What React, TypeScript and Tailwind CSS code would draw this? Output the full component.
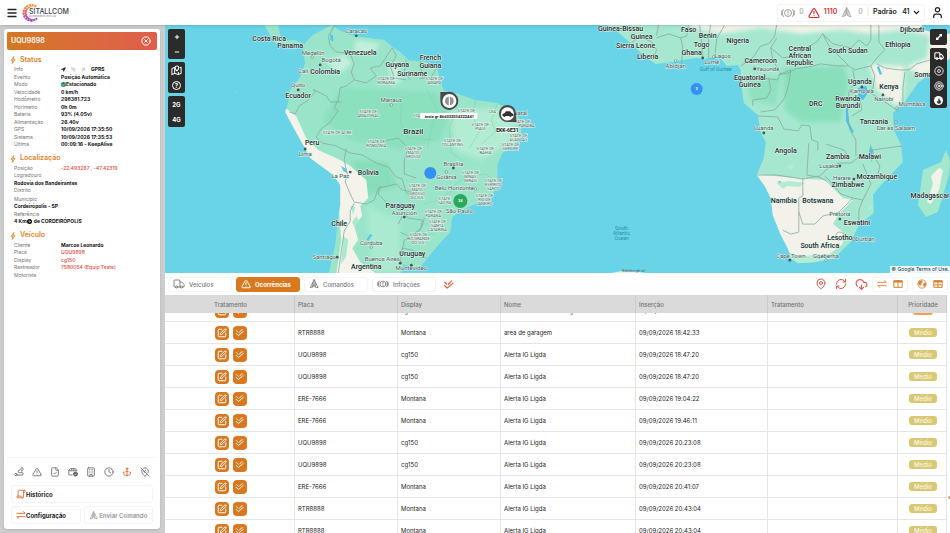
import { useLayoutEffect, useRef, useState } from "react";
import type { ReactNode } from "react";
import {
  Anchor,
  Building,
  ChevronDown,
  CircleX,
  Clock,
  CloudDownload,
  FileCheck,
  Flame,
  MapPin,
  MapPinOff,
  Menu,
  Minus,
  Navigation,
  Plus,
  RefreshCw,
  Satellite,
  Scroll,
  SquarePen,
  Target,
  TriangleAlert,
  Truck,
  User,
  WifiOff
} from "lucide-react";

type Field = { label: string; value?: ReactNode; red?: boolean };

const statusFields: Field[] = [
  { label: "Evento", value: "Posição Automática" },
  {
    label: "Modo",
    value: (
      <span className="flex items-center">
        <svg viewBox="0 0 10 10" className="size-[5px]">
          <circle cx="5" cy="5" r="5" fill="#15924f" />
          <path d="M2.5 5.2l1.8 1.8L7.6 3.4" stroke="#fff" strokeWidth="1.2" fill="none" />
        </svg>
        Estacionado
      </span>
    )
  },
  { label: "Velocidade", value: "0 km/h" },
  { label: "Hodômetro", value: "298381.723" },
  { label: "Horímetro", value: "0h 0m" },
  { label: "Bateria", value: "93% (4.05v)" },
  { label: "Alimentação", value: "26.40v" },
  { label: "GPS", value: "10/09/2026 17:35:50" },
  { label: "Sistema", value: "10/09/2026 17:35:53" },
  { label: "Última", value: "00:09:16 - KeepAlive" }
];

const vehicleFields: Field[] = [
  { label: "Cliente", value: "Marcos Leonardo" },
  { label: "Placa", value: "UQU9898", red: true },
  { label: "Display", value: "cg150", red: true },
  { label: "Rastreador", value: "7580054 (Equip Teste)", red: true },
  { label: "Motorista" }
];

const rows = [
  ["UQU9898", "cg150", "Bateria do veículo desligada", "10/09/2026 08:12:15", "Alta"],
  ["RTR8888", "Montana", "area de garagem", "09/09/2026 18:42:33", "Médio"],
  ["UQU9898", "cg150", "Alerta IG Ligda", "09/09/2026 18:47:20", "Médio"],
  ["UQU9898", "cg150", "Alerta IG Ligda", "09/09/2026 18:47:20", "Médio"],
  ["ERE-7666", "Montana", "Alerta IG Ligda", "09/09/2026 19:04:22", "Médio"],
  ["ERE-7666", "Montana", "Alerta IG Ligda", "09/09/2026 19:46:11", "Médio"],
  ["UQU9898", "cg150", "Alerta IG Ligda", "09/09/2026 20:23:08", "Médio"],
  ["UQU9898", "cg150", "Alerta IG Ligda", "09/09/2026 20:23:08", "Médio"],
  ["ERE-7666", "Montana", "Alerta IG Ligda", "09/09/2026 20:41:07", "Médio"],
  ["RTR8888", "Montana", "Alerta IG Ligda", "09/09/2026 20:43:04", "Médio"],
  ["RTR8888", "Montana", "Alerta IG Ligda", "09/09/2026 20:43:04", "Médio"]
];

type Label = [number, number, string];

const countries: Label[] = [
  [269, 41, "Costa Rica"], [290, 48, "Panama"], [360, 55, "Venezuela"], [325, 74, "Colombia"],
  [298, 98, "Ecuador"], [397, 67, "Guyana"], [430, 60, "French"], [430, 68, "Guiana"],
  [412, 76, "Suriname"], [312, 145, "Peru"], [368, 175, "Bolivia"], [400, 208, "Paraguay"],
  [339, 226, "Chile"], [412, 256, "Uruguay"], [366, 269, "Argentina"], [620, 31, "Guinea-Bissau"],
  [641, 39, "Guinea"], [635, 48, "Sierra Leone"], [647, 59, "Liberia"], [688, 32, "Faso"],
  [691, 55, "Ghana"], [707, 38, "Benin"], [701, 47, "Togo"], [737, 43, "Nigeria"],
  [760, 63, "Cameroon"], [799, 51, "Central"], [799, 58, "African"], [799, 65, "Republic"],
  [847, 53, "South Sudan"], [897, 47, "Ethiopia"], [911, 32, "Djibouti"], [926, 77, "Somalia"],
  [749, 80, "Equatorial"], [749, 87, "Guinea"], [859, 84, "Uganda"], [888, 89, "Kenya"],
  [847, 101, "Rwanda"], [847, 108, "Burundi"], [815, 106, "DRC"], [873, 124, "Tanzania"],
  [785, 153, "Angola"], [837, 159, "Zambia"], [869, 159, "Malawi"], [876, 179, "Mozambique"],
  [847, 187, "Zimbabwe"], [783, 203, "Namibia"], [817, 203, "Botswana"], [929, 198, "Madagascar"],
  [856, 225, "Eswatini"], [839, 240, "Lesotho"], [819, 248, "South Africa"]
];

const cities: Label[] = [
  [356, 33, "Caracas"], [313, 55, "Medellín"], [331, 62, "Bogotá"], [303, 73, "Cali"],
  [298, 87, "Quito"], [391, 102, "Manaus"], [305, 156, "Lima"], [340, 178, "La Paz"],
  [404, 215, "Asunción"], [371, 245, "Córdoba"], [324, 259, "Santiago"], [382, 261, "Buenos Aires"],
  [411, 270, "Montevideo"], [453, 166, "Brasília"], [446, 179, "Goiânia"], [454, 190, "Belo Horizonte"],
  [459, 213, "São Paulo"], [675, 68, "Abidjan"], [722, 58, "Lagos"], [711, 64, "Lomé"],
  [767, 71, "Yaoundé"], [861, 93, "Kampala"], [883, 101, "Nairobi"], [911, 106, "Mombasa"],
  [895, 130, "Dar es Salaam"], [763, 130, "Luanda"], [828, 168, "Lusaka"], [841, 180, "Harare"],
  [839, 216, "Pretoria"], [864, 241, "Durban"], [790, 258, "Cape Town"], [825, 258, "Gqeberha"],
  [520, 115, "Natal"]
];

const states: Label[] = [
  [386, 80, "STATE OF"], [386, 84, "RORAIMA"], [434, 80, "STATE OF"], [434, 84, "AMAPÁ"],
  [368, 113, "STATE OF"], [368, 117, "AMAZONAS"], [416, 117, "STA"], [337, 134, "STATE OF ACRE"],
  [376, 143, "STATE OF"], [376, 147, "RONDÔNIA"], [413, 150, "STATE OF"], [413, 154, "MATO"],
  [413, 158, "GROSSO"], [466, 112, "STATE OF"], [480, 126, "STATE OF"],
  [480, 130, "PIAUÍ"], [492, 113, "CEA"], [521, 123, "STATE OF"], [526, 127, "PARAÍBA"],
  [452, 142, "STATE OF"], [452, 146, "TOCANTINS"], [518, 137, "STATE OF"], [518, 141, "ALAGOAS"],
  [510, 146, "STATE OF"], [510, 150, "SERGIPE"], [485, 150, "STATE OF"], [485, 154, "BAHIA"],
  [470, 174, "STATE OF"], [470, 178, "MINAS"], [470, 182, "GERAIS"], [493, 182, "STATE OF"],
  [493, 186, "ESPÍRITO"], [493, 190, "SANTO"], [484, 197, "STATE OF"], [484, 201, "RIO DE"],
  [484, 205, "JANEIRO"], [444, 200, "STATE"], [444, 204, "SÃO PA"], [417, 187, "STATE OF"],
  [417, 191, "MATO"], [417, 195, "GROSSO"], [417, 199, "DO SUL"], [433, 213, "STATE OF"],
  [433, 217, "PARANÁ"], [437, 223, "STATE OF"], [437, 227, "SANTA"], [437, 231, "CATARINA"],
  [418, 236, "STATE OF"], [418, 240, "RIO GRANDE"], [418, 244, "DO SUL"]
];

const dots = [
  [356, 36], [320, 65], [298, 90], [305, 149], [350, 172], [404, 217], [337, 257], [400, 263],
  [411, 265], [453, 168], [702, 58], [754, 69], [861, 87], [882, 95], [763, 133], [839, 166],
  [853, 179], [839, 219], [789, 260]
];

const rings = [
  [312, 57], [391, 105], [371, 247], [446, 172], [475, 189], [675, 61], [713, 57], [896, 108],
  [895, 122], [853, 239], [825, 260]
];

const borders = [
  "M333 27l-5 10 2 9 6 6 14 2 4 10-3 8 3 8-8 6-6 2-2 12-4 8 4 3-9 12-8 6-5 8 6 6 14 3 14 7 12 2 14 8 12 4 8 10 6 2 4 14 10 4",
  "M354 80l12 3 10-7-6-8 10-2 12-18M392 48l4 8-6 10 4 12 12 2M406 60l-2 12 6 8M420 60l2 18M437 67l-6 10-12 2M289 112l6 2 4-8 8-5 8-9-2-3",
  "M314 90l12 6 4 6 12 0 M346 148l-2 12 3 14-2 8 5 12 4 8 12 2 8-4 4-12 18-4 6 6 12 2",
  "M380 186l-2 8 12 12 10 4 8 8 14 2-2 10-12 6-8-4M402 216l-4 8M424 218l-2 8-12 12-6 2-2 10M402 248l10 2 14 8M402 248l-2 14",
  "M354 203l-4 8 0 10-6 10-2 14-2 14-2 14M380 142l18-4 10 10-4 12 0 14 12 4",
  "M617 32l10-4 4-4M631 43l8-7 12 6 5 8-4 10M656 36l2-12M656 38l12-4 12 4 6-2 2-12M680 38l2 8-1 18M702 59l-1-16-2-18M708 58l0-20 2-14M714 57l2-18 8-14",
  "M740 66l12-8 8-12 8-2 6-8 2-12M776 38l-6 10 2 12 8 14 10-4M770 48l12 10 14-2 10-8 10-6 6-8M822 34l6 12 20 20-12 0-16-2-12 3-14 2-6 4-10 2M822 34l10 10 18 4 8-8 8 6 4-6 0-16",
  "M848 66l6 4 16-4 6-8 8-8-6-8 0-16M876 64l8 4 14 2 10 0 8-6 20-6M904 72l-2 16 0 14M870 66l4 10-2 12-4 4M852 70l2 12-6 10-1 18M868 92l22 14 8 6M868 92l-10 0-8 2M847 98l12 2 2 10-10 6",
  "M743 80l8 0 8-2 18 2 2-6M768 78l2 12-4 8-14 2 0 6M790 70l-2 14-4 14-10 12-14 2M757 116l20 1 6 12 14 2 4-6 8 1 2 14 6 2 0 8M847 116l2 14 6 10 0 16M808 143l-2 32 12 2 8 4M825 144l18 6 6 8M756 175l20 0 26 4 16-3M818 177l8-8 12-6 12 0 8-6 8 2 6-8M871 148l2 8 6 10-2 8M871 150l30-4",
  "M802 178l0 18-4 2 0 34-8 2-8-4M798 212l4 12 12 0 8-8 16-4 14-14-12-4-10-12-6-6M852 198l10 2 8-16-8-20M862 200l-4 10 0 14-4 0M846 220l8 4"
];

const stateBorders = [
  "M427 90l10 20-6 18-4 20M455 94l2 18-8 14 2 26 10 8M475 100l-2 18 6 14-10 16M497 104l-6 16 4 12-14 12",
  "M497 182l-12-8-18 2-14 10-6 16M424 204l14-4 14-10M425 224l24-4M418 236l16-2M402 96l-2 26 8 16 26 2"
];

const southAmerica =
  "M303 52L305 63 300 77 290 90 288 103 285 112 293 127 303 145 310 158 333 175 340 185 340 205 337 225 335 245 328 275 400 275 403 264 410 266 420 267 427 258 438 245 450 232 452 217 462 210 475 204 492 195 497 182 497 165 502 153 515 145 520 135 522 123 515 113 497 103 475 100 455 93 444 91 440 83 437 67 425 62 408 60 400 52 392 47 384 40 374 39 360 37 350 35 340 31 334 27 331 34 333 25 326 28 313 35 306 42 303 46 294 43 286 46 276 44 270 36 264 24 278 24 280 36 284 41 294 40 304 44z";

const africa =
  "M604 23L617 32 626 40 632 45 642 55 655 64 672 62 682 60 695 58 703 59 718 56 726 66 737 65 740 70 740 80 743 103 757 115 760 133 765 142 763 158 756 175 764 186 770 198 772 215 780 235 787 248 790 258 797 263 813 262 833 258 850 242 858 225 873 213 872 195 880 185 902 162 900 145 893 130 892 113 903 103 917 83 930 73 952 56 952 34 935 34 922 30 920 23z";

type IconProps = { className?: string };

function SirenIcon({ className }: IconProps) {
  return (
    <svg viewBox="0 0 28 24" className={className} fill="none" stroke="currentColor" strokeWidth="2" strokeLinecap="round">
      <circle cx="14" cy="12" r="7" />
      <path d="M14 8v4.5M14 15.5v.3M5 5a11 11 0 0 0 0 14M23 5a11 11 0 0 1 0 14M2 7a13 13 0 0 0 0 10M26 7a13 13 0 0 1 0 10" />
    </svg>
  );
}

function CommandIcon({ className }: IconProps) {
  return (
    <svg viewBox="0 0 24 24" className={className} fill="none" stroke="currentColor" strokeWidth="2" strokeLinejoin="round" strokeLinecap="round">
      <path d="M12 2L3 21l6-2 3-5 3 5 6 2zM12 2v12M9 19V9M15 19V9" />
    </svg>
  );
}

function DoubleCheck({ className }: IconProps) {
  return (
    <svg viewBox="0 0 24 24" className={className} fill="none" stroke="currentColor" strokeWidth="2.6" strokeLinecap="round" strokeLinejoin="round">
      <path d="M3 14l6 6L22 9M4 7l4 4M12 11l7-7" />
    </svg>
  );
}

function TransferIcon({ className }: IconProps) {
  return (
    <svg viewBox="0 0 24 24" className={className} fill="none" stroke="currentColor" strokeWidth="2.2" strokeLinecap="round" strokeLinejoin="round">
      <path d="M2 8h20l-4-4M22 16H2l4 4" />
    </svg>
  );
}

function RouteIcon({ className }: IconProps) {
  return (
    <svg viewBox="0 0 24 24" className={className} fill="none" stroke="currentColor" strokeWidth="2" strokeLinecap="round" strokeLinejoin="round">
      <circle cx="4.500" cy="18" r="2.800" />
      <path d="M7.500 19.500H19a3 3 0 0 0 0-6h-6a3 3 0 0 1 0-6h1M19 9.500s3-2.600 3-5a3 3 0 0 0-6 0c0 2.400 3 5 3 5z" />
    </svg>
  );
}

function DeliveryIcon({ className }: IconProps) {
  return (
    <svg viewBox="0 0 24 24" className={className} fill="none" stroke="currentColor" strokeWidth="2" strokeLinejoin="round">
      <path d="M11 19H2V8l3-4h13l3 4v2M2 9h19M9 4v5M14 4v5" />
      <circle cx="18" cy="17" r="5" fill="currentColor" />
      <path d="M16 17l1.500 1.500L20 16" stroke="#fff" strokeWidth="1.500" />
    </svg>
  );
}

function ColumnsIcon({ className }: IconProps) {
  return (
    <svg viewBox="0 0 24 24" className={className} fill="none" stroke="currentColor" strokeWidth="2.400" strokeLinejoin="round">
      <path d="M2 4h20v16H2zM12 6v14" />
      <path d="M2 6h20" strokeWidth="5" />
    </svg>
  );
}

function GridIcon({ className }: IconProps) {
  return (
    <svg viewBox="0 0 24 24" className={className} fill="none" stroke="currentColor" strokeWidth="2.400" strokeLinejoin="round">
      <path d="M2 4h20v16H2zM12 6v14M2 14h20" />
      <path d="M2 6h20" strokeWidth="5" />
    </svg>
  );
}

function BoltIcon({ className }: IconProps) {
  return (
    <svg viewBox="0 0 14 20" className={className} fill="none" stroke="currentColor" strokeWidth="2.2" strokeLinejoin="round">
      <path d="M9 1.500L2 11h4.500L5 18.500 12 9H7.500z" />
    </svg>
  );
}

function Logo() {
  return (
    <div className="flex items-center">
      <svg viewBox="0 0 24 24" className="h-[18px] w-[18px]" fill="none">
        <defs>
          <linearGradient id="ring" x1="0" y1="0" x2="0" y2="1">
            <stop offset="0" stopColor="#f39a3e" />
            <stop offset=".5" stopColor="#e2606c" />
            <stop offset="1" stopColor="#9a35c9" />
          </linearGradient>
        </defs>
        <path d="M19 3.5A10.500 10.500 0 1 0 20 19" stroke="url(#ring)" strokeWidth="2.600" strokeDasharray="3 .8" />
        <path d="M18 5A9 9 0 1 0 18 19 8 8 0 1 1 18 5z" fill="url(#ring)" />
      </svg>
      <div className="-ml-[11px] flex flex-col">
        <span className="text-[7px] leading-[7px] font-medium text-[#3c3c44]">SITALLCOM</span>
        <span className="text-[2px] leading-[3px] text-gray-500">RASTREAMENTO VEICULAR</span>
      </div>
    </div>
  );
}

function TopBar() {
  return (
    <header className="relative z-10 flex h-[25px] shrink-0 items-center justify-between bg-white px-[6px] shadow-sm">
      <div className="flex items-center gap-1">
        <button aria-label="Menu" className="text-[#222]">
          <Menu className="size-3" strokeWidth={2.6} />
        </button>
        <Logo />
      </div>
      <div className="flex items-center gap-[6px]">
        <div className="flex h-[18px] items-center rounded-[3px] border border-gray-100 px-[3px] text-[7px]">
          <SirenIcon className="h-3 w-[14px] text-neutral-400" />
          <span className="ml-1 text-neutral-400">0</span>
          <TriangleAlert className="ml-1 size-3 text-[#d32f2f]" strokeWidth={2.4} />
          <span className="ml-1 font-semibold text-[#d32f2f]">1110</span>
          <CommandIcon className="ml-1 size-[11px] text-neutral-400" />
          <span className="ml-[6px] text-neutral-400">0</span>
          <span className="mx-1 text-neutral-300">|</span>
          <div className="relative flex items-center">
            <select aria-label="Perfil" className="appearance-none pr-[11px] font-semibold text-[#222]">
              <option>Padrão&nbsp;&nbsp; 41</option>
            </select>
            <ChevronDown className="pointer-events-none absolute right-0 size-[9px]" strokeWidth={2.8} />
          </div>
        </div>
        <button aria-label="Usuário" className="text-[#222]">
          <User className="size-[13px]" strokeWidth={2.4} />
        </button>
      </div>
    </header>
  );
}

function SectionTitle({ children }: { children: ReactNode }) {
  return (
    <h2 className="flex h-3 items-center gap-1 pl-[3px] text-[7px] font-semibold text-[#de8228]">
      <BoltIcon className="h-2 w-[6px]" />
      {children}
    </h2>
  );
}

function FieldRow({ label, value, red }: Field) {
  return (
    <div className="flex">
      <dt className="w-[47px] text-neutral-500">{label}</dt>
      <dd className={red ? "font-medium text-[#e0483e]" : "font-bold text-[#111]"}>{value}</dd>
    </div>
  );
}

function VehiclePanel() {
  const tools = [RouteIcon, TriangleAlert, FileCheck, DeliveryIcon, Building, Clock, Anchor, MapPinOff];
  const names = ["Rota", "Alertas", "Documento", "Entregas", "Empresa", "Horário", "Âncora", "Sem local"];

  return (
    <aside className="flex w-[165px] shrink-0 flex-col bg-[#cdcdcd] py-1 pr-[5px] pl-1">
      <div className="flex flex-1 flex-col rounded-[3px] bg-white p-[3px] shadow">
        <div className="flex h-[18px] items-center justify-between rounded-[2px] bg-linear-to-r from-[#d4781f] to-[#e05d4c] px-1 text-white">
          <h1 className="text-[7px] font-semibold">UQU9898</h1>
          <button aria-label="Fechar" className="mr-[2px]">
            <CircleX className="size-[10px]" strokeWidth={2.4} />
          </button>
        </div>

        <div className="pt-1 text-[5px] leading-normal">
          <SectionTitle>Status</SectionTitle>
          <dl className="pl-[7px]">
            <FieldRow
              label="Info"
              value={
                <span className="flex items-center gap-[5px]">
                  <Navigation className="size-[5px]" fill="currentColor" />
                  <WifiOff className="size-[5px] text-neutral-400" />
                  <Satellite className="size-[5px] text-neutral-400" />
                  GPRS
                </span>
              }
            />
            {statusFields.map((f) => (
              <FieldRow key={f.label} {...f} />
            ))}
          </dl>
        </div>

        <div className="pt-1 text-[5px] leading-normal">
          <SectionTitle>Localização</SectionTitle>
          <dl className="pl-[7px]">
            <FieldRow label="Posição" value="-22.493267 , -47.42319" red />
            <dt className="text-neutral-500">Logradouro</dt>
            <dd className="font-bold text-[#111]">Rodovia dos Bandeirantes</dd>
            <dt className="text-neutral-500">Distrito</dt>
            <dt className="pt-px text-neutral-500">Município</dt>
            <dd className="font-bold text-[#111]">Cordeirópolis - SP</dd>
            <dt className="text-neutral-500">Referência</dt>
            <dd className="flex items-center font-bold text-[#111]">
              4 Km
              <svg viewBox="0 0 10 10" className="mr-[2px] size-[5px]">
                <circle cx="5" cy="5" r="5" fill="#111" />
                <path d="M3 5h4M5 3l2 2-2 2" stroke="#fff" strokeWidth="1.2" fill="none" />
              </svg>
              de CORDEIRÓPOLIS
            </dd>
          </dl>
        </div>

        <div className="pt-1 text-[5px] leading-normal">
          <SectionTitle>Veículo</SectionTitle>
          <dl className="pl-[7px]">
            {vehicleFields.map((f) => (
              <FieldRow key={f.label} {...f} />
            ))}
          </dl>
        </div>

        <div className="mt-auto border-t border-gray-100 px-1 pt-[9px] pb-[2px]">
          <div className="flex justify-between px-[3px] text-[#666]">
            {tools.map((Icon, i) => (
              <button key={names[i]} aria-label={names[i]} className={i === 6 ? "text-[#d9672b]" : ""}>
                <Icon className="size-[10px]" />
              </button>
            ))}
          </div>
          <div className="mt-2 grid grid-cols-2 gap-[3px] text-[6px] font-bold text-[#222]">
            <button className="col-span-2 flex h-[18px] items-center rounded-[3px] border border-gray-100 px-1">
              <Scroll className="size-[10px] -scale-x-100 text-[#d9672b]" />
              Histórico
            </button>
            <button className="flex h-[18px] items-center rounded-[3px] border border-gray-100 px-1">
              <TransferIcon className="size-[10px] text-[#d9672b]" />
              Configuração
            </button>
            <button className="flex h-[18px] items-center justify-center gap-px rounded-[3px] border border-gray-100 text-neutral-400" disabled>
              <CommandIcon className="size-[9px]" />
              Enviar Comando
            </button>
          </div>
        </div>
      </div>
    </aside>
  );
}

function WorldMap() {
  return (
    <svg viewBox="165 25 785 248" preserveAspectRatio="xMidYMid slice" className="absolute inset-0 size-full font-['Roboto',sans-serif]">
      <defs>
        <clipPath id="sa"><path d={southAmerica} /></clipPath>
        <clipPath id="af"><path d={africa} /></clipPath>
        <filter id="soft"><feGaussianBlur stdDeviation="2" /></filter>
      </defs>
      <rect x="165" y="25" width="785" height="248" fill="#69d3e7" />

      <path d={southAmerica} fill="#9ae5c9" />
      <g clipPath="url(#sa)">
        <g filter="url(#soft)">
          <path d="M340 88L436 92 450 110 440 140 400 150 350 140 322 120z" fill="#8be0be" />
          <path d="M350 160L388 162 396 186 366 196z" fill="#88deba" />
          <path d="M325 60L345 55 352 64 338 74z M388 66l10-4 4 18-10 6z M356 40l24 4-8 10-18-2z" fill="#c3f0dc" />
          <path d="M450 110L510 108 515 140 480 160 455 150z" fill="#b2ecd2" />
          <path d="M366 205L400 220 400 270 372 272z" fill="#a9ead0" />
        </g>
        <path d="M280 104L296 116 306 138 318 150 340 160 350 166 357 172 366 180 368 198 360 206 362 216 354 226 358 240 352 248 360 262 378 275 336 275 341 240 338 200 320 180z" fill="#f3f3ea" />
        <path d="M343 236l5 4-2 16-5 8zM352 222l4-6 3 5-5 6zM350 206l5 1-2 7z" fill="#a9ead0" />
        <path d="M341 166l5 3 1 4-4-2zM330 34l3 2 0 6-3-2zM352 218l3-3M366 240l4-6 2 1-4 6z" fill="#58c6ea" />
      </g>

      <path d={africa} fill="#a5e8cf" />
      <g clipPath="url(#af)">
        <g filter="url(#soft)">
          <path d="M782 68L842 66 848 80 840 122 800 122 784 110z" fill="#89dfbb" />
          <path d="M745 80L780 76 776 106 750 100z" fill="#8fe1c0" />
          <path d="M690 22L950 22 950 32 930 36 900 30 870 34 840 30 800 34 760 28 720 34 690 28z" fill="#f1f2e8" />
          <path d="M930 28L952 24 952 60 920 78 906 66 926 58z" fill="#f1f2e8" />
          <path d="M868 64L904 66 902 100 896 106 876 90z" fill="#f1f2e8" />
        </g>
        <path d="M752 174L806 179 824 180 842 198 852 200 838 214 832 224 842 232 842 244 826 256 800 256 780 250 760 200z" fill="#f3f2ea" />
        <path d="M776 183l12-2 16 2-6 4-12-1-4 3zM786 168l4-4 4 2-3 4zM868 204l4 4-4 2z" fill="#b2ecd2" />
        <path d="M786 252l8 6 20-4 12 0 8 4-10 6-30 2z" fill="#b2ecd2" />
        <path d="M857 88l8-2 3 6-6 8-5-2zM845 108l2 0 1 14 5 10-2 1-6-12zM870 144l2 12-1 6-3-10zM878 66l3 8-2 1-3-8zM776 182l4-1 0 2z" fill="#4fc1ea" />
      </g>
      <path d="M945 150L940 162 922 170 920 185 917 205 925 217 937 212 948 175 949 160z" fill="#a3e8cd" />
      <path d="M938 168l4 2-4 20-8 14-4-2 6-18-2-8z" fill="#f1f2e8" />
      <path d="M610 273l10-2 14 0 12 2z" fill="#e6efe6" />
      <path d="M234 91l2 1-1 1zM242 92l2 0-1 1z" fill="#97e5c6" />

      <g fill="none" stroke="#86ab9e" strokeWidth=".8" strokeLinejoin="round">
        {borders.map((d) => (
          <path key={d} d={d} />
        ))}
        <circle cx="839" cy="236" r="4" />
      </g>
      <g fill="none" stroke="#84cdb1" strokeWidth=".5">
        {stateBorders.map((d) => (
          <path key={d} d={d} />
        ))}
      </g>

      <g textAnchor="middle" stroke="#e3f6ee" strokeWidth="1" paintOrder="stroke" strokeLinejoin="round">
        <g fontSize="4" fill="#4d635c">
          {states.map(([x, y, name], i) => (
            <text key={i} x={x} y={y}>{name}</text>
          ))}
        </g>
        <g fontSize="6" fill="#47565a">
          {cities.map(([x, y, name]) => (
            <text key={name} x={x} y={y}>{name}</text>
          ))}
        </g>
        <g fontSize="7" fontWeight="500" fill="#222c2e">
          {countries.map(([x, y, name], i) => (
            <text key={i} x={x} y={y}>{name}</text>
          ))}
          <text x="413" y="134" fontSize="8">Brazil</text>
        </g>
      </g>
      <g textAnchor="middle" fontSize="5" fill="#2c8fa8">
        <text x="715" y="71">Gulf of Guinea</text>
        <text x="621" y="230">South</text>
        <text x="621" y="235">Atlantic</text>
        <text x="621" y="240">Ocean</text>
      </g>
      <text x="633" y="272" textAnchor="middle" fontSize="4" fill="#47565a">Edinburgh of</text>

      {dots.map(([x, y]) => (
        <circle key={`${x}-${y}`} cx={x} cy={y} r="1.400" fill="#47565a" />
      ))}
      {rings.map(([x, y]) => (
        <circle key={`${x}-${y}`} cx={x} cy={y} r="1.200" fill="#fff" stroke="#47565a" strokeWidth=".5" />
      ))}

      <circle cx="430" cy="173" r="6" fill="#3391f2" />
      <circle cx="696" cy="89" r="6" fill="#3391f2" />
      <circle cx="460" cy="201" r="7" fill="#2aa95b" />
      <g textAnchor="middle" fontSize="4" fontWeight="700" fill="#fff">
        <text x="696" y="90">2</text>
        <text x="460" y="202">34</text>
      </g>

      <path d="M440 92h8a9 9 0 1 1-8 9z" fill="#4a4a4a" />
      <circle cx="449" cy="101" r="7" fill="#fff" />
      <g fill="#999" stroke="#666" strokeWidth=".5">
        <path d="M448 97v8q-3-1-3-4t3-4zM450 97v8q3-1 3-4t-3-4z" />
      </g>
      <path d="M516 122h-9a8.500 8.500 0 1 1 8.500-8z" fill="#4a4a4a" />
      <circle cx="507" cy="114" r="6.600" fill="#fff" />
      <path d="M502 116v-2l2-.6 1.500-2h4l2 2 1.500.6v2z" fill="#333" />
      <circle cx="504" cy="116" r="1" fill="#333" />
      <circle cx="510" cy="116" r="1" fill="#333" />
      <rect x="420" y="113" width="57" height="6" fill="#fff" />
      <rect x="496" y="127" width="22" height="6" fill="#fff" opacity=".8" />
      <g textAnchor="middle" fontWeight="700" fill="#111">
        <text x="449" y="118" fontSize="4">teste gr 866032034322441</text>
        <text x="507" y="132" fontSize="5">EKK-6E31</text>
      </g>
    </svg>
  );
}

function MapPanel() {
  return (
    <section aria-label="Mapa" className="relative overflow-hidden">
      <WorldMap />
      <div className="absolute top-1 left-[3px] flex flex-col gap-[3px] text-white">
        <div className="flex w-[17px] flex-col rounded-[2px] bg-[#2b2b2b]">
          <button aria-label="Aproximar" className="grid h-[15px] place-items-center"><Plus className="size-[6px]" strokeWidth={4} /></button>
          <button aria-label="Afastar" className="grid h-[15px] place-items-center"><Minus className="size-[6px]" strokeWidth={4} /></button>
        </div>
        <div className="flex w-[17px] flex-col rounded-[2px] bg-[#2b2b2b]">
          <button aria-label="Mapa com ponto" className="grid h-4 place-items-center">
            <svg viewBox="0 0 24 24" className="size-[11px]" fill="none" stroke="currentColor" strokeWidth="2.200" strokeLinejoin="round">
              <path d="M8 5L2 8v13l6-3 8 3 6-3V5l-3 1M8 5v13M16 15v6" />
              <path d="M13 13s4-4 4-7a4 4 0 0 0-8 0c0 3 4 7 4 7z" />
            </svg>
          </button>
          <button aria-label="Ajuda" className="grid h-[15px] place-items-center">
            <span className="grid size-[9px] place-items-center rounded-full border border-white text-[6px] leading-none font-bold">?</span>
          </button>
        </div>
        <div className="flex w-[17px] flex-col rounded-[2px] bg-[#2b2b2b] text-[6px] font-bold">
          <button className="h-4">2G</button>
          <button className="h-[15px]">4G</button>
        </div>
      </div>
      <div className="absolute top-1 right-1 flex flex-col gap-[3px] text-white">
        <button aria-label="Expandir" className="grid h-4 w-[17px] place-items-center rounded-[2px] bg-[#2b2b2b]">
          <svg viewBox="0 0 12 12" className="size-[6px]" fill="currentColor">
            <path d="M6 0h6v6l-2-2-6 6 2 2H0V6l2 2 6-6z" />
          </svg>
        </button>
        <div className="flex w-[17px] flex-col items-center rounded-[2px] bg-[#2b2b2b]">
          <button aria-label="Frota" className="grid h-[15px] place-items-center"><Truck className="size-[10px]" strokeWidth={2.6} /></button>
          <button aria-label="Ponto" className="grid h-[15px] place-items-center">
            <svg viewBox="0 0 24 24" className="size-[10px]" fill="none" stroke="currentColor" strokeWidth="2"><circle cx="12" cy="12" r="10" /><circle cx="12" cy="12" r="3.500" /></svg>
          </button>
          <button aria-label="Alvo" className="grid h-[15px] place-items-center"><Target className="size-[10px]" /></button>
          <button aria-label="Calor" className="grid h-[15px] place-items-center">
            <span className="grid size-[9px] place-items-center rounded-full bg-white text-[#2b2b2b]"><Flame className="size-[6px]" fill="currentColor" /></span>
          </button>
        </div>
      </div>
      <a href="#termos" className="absolute right-0 bottom-0 bg-[#e6f6fa] px-[2px] text-[5px] leading-[7px] text-[#333]">© Google Terms of Use.</a>
    </section>
  );
}

function Tabs() {
  const [active, setActive] = useState("Ocorrências");
  const tabs = [
    { name: "Veículos", icon: <Truck className="size-3" strokeWidth={1.8} /> },
    { name: "Ocorrências", icon: <TriangleAlert className="size-[10px]" strokeWidth={2.4} /> },
    { name: "Comandos", icon: <CommandIcon className="size-[10px]" /> },
    { name: "Infrações", icon: <SirenIcon className="h-[10px] w-3" /> }
  ];

  return (
    <div className="flex h-[22px] shrink-0 items-center justify-between px-[3px]">
      <div className="flex items-center gap-1">
        {tabs.map((t) => (
          <button
            key={t.name}
            onClick={() => setActive(t.name)}
            className={`flex h-[15px] w-16 items-center gap-1 rounded-[3px] border px-1 text-[6px] ${
              t.name === active ? "border-[#d9781e] bg-[#d9781e] font-bold text-white" : "border-gray-100 font-medium text-[#777]"
            }`}
          >
            {t.icon}
            {t.name}
          </button>
        ))}
        <button aria-label="Tratar todos" className="ml-[3px] text-[#e0552f]">
          <DoubleCheck className="size-[11px]" />
        </button>
      </div>
      <div className="flex items-center gap-2 text-[#dd5347]">
        <button aria-label="Localizar"><MapPin className="size-3" /></button>
        <button aria-label="Atualizar"><RefreshCw className="size-3" /></button>
        <button aria-label="Baixar"><CloudDownload className="size-[13px]" /></button>
        <div className="-ml-1 flex h-[15px] items-center gap-[6px] rounded-[3px] border border-gray-100 px-1 text-[#dc8130]">
          <button aria-label="Trocar"><TransferIcon className="size-[10px]" /></button>
          <button aria-label="Colunas"><ColumnsIcon className="size-[10px]" /></button>
        </div>
        <div className="-ml-1 flex h-[15px] items-center gap-[6px] rounded-[3px] border border-gray-100 px-1 text-[#dc8130]">
          <button aria-label="Mundo">
            <svg viewBox="0 0 24 24" className="size-[10px]">
              <circle cx="12" cy="12" r="10" fill="none" stroke="currentColor" strokeWidth="2" />
              <path d="M4 6l7-3 3 4-4 3 1 4-4 2-5-5zM15 11l6-3 1 5-4 7-3-3z" fill="currentColor" />
            </svg>
          </button>
          <button aria-label="Tabela"><GridIcon className="size-[10px]" /></button>
        </div>
      </div>
    </div>
  );
}

function EventsTable() {
  const scroller = useRef<HTMLDivElement>(null);

  useLayoutEffect(() => {
    if (scroller.current) scroller.current.scrollTop = 13;
  }, []);

  const cell = "h-[22px] border-r border-b border-neutral-200 pr-px pl-[3px]";

  return (
    <div className="flex min-h-0 flex-1">
      <div ref={scroller} className="min-w-0 flex-1 overflow-y-auto [scrollbar-width:none]">
        <table className="w-full table-fixed border-separate border-spacing-0 text-left text-[6px] text-[#222]">
          <colgroup>
            <col className="w-[130px]" />
            <col className="w-[103px]" />
            <col className="w-[103px]" />
            <col className="w-[135px]" />
            <col className="w-[132px]" />
            <col className="w-[130px]" />
            <col className="w-[49px]" />
          </colgroup>
          <thead className="sticky top-0 z-10">
            <tr className="text-[6px] text-neutral-500">
              {["Tratamento", "Placa", "Display", "Nome", "Inserção", "Tratamento", "Prioridade"].map((h, i) => (
                <th
                  key={i}
                  className={`h-[18px] border-r border-[#cbcbcb] bg-[#dadada] pr-px pl-[3px] font-medium ${i === 0 || i === 6 ? "text-center" : ""}`}
                >
                  {h}
                </th>
              ))}
            </tr>
          </thead>
          <tbody>
            {rows.map(([plate, display, name, date, level], i) => (
              <tr key={i}>
                <td className={cell}>
                  <div className="flex justify-center gap-1">
                    <button aria-label="Editar" className="grid size-[14px] place-items-center rounded-[4px] bg-[#d9781e] text-white">
                      <SquarePen className="size-[10px]" strokeWidth={2.4} />
                    </button>
                    <button aria-label="Tratar" className="grid size-[14px] place-items-center rounded-[4px] bg-[#d9781e] text-white">
                      <DoubleCheck className="size-[9px]" />
                    </button>
                  </div>
                </td>
                <td className={cell}>{plate}</td>
                <td className={cell}>{display}</td>
                <td className={cell}>{name}</td>
                <td className={cell}>{date}</td>
                <td className={cell}></td>
                <td className={cell}>
                  <span
                    className={`mx-auto block w-fit rounded-[3px] text-[6px] leading-[9px] font-medium text-[#fbf7e4] ${
                      level === "Alta" ? "bg-[#f0a058] px-1" : "bg-[#d8c873] px-[5px]"
                    }`}
                  >
                    {level}
                  </span>
                </td>
              </tr>
            ))}
          </tbody>
        </table>
      </div>
      <div className="flex w-1 flex-col justify-end pb-[34px] pl-px">
        <div className="h-[3px] rounded-full bg-[#e8a365]" />
      </div>
    </div>
  );
}

export default function App() {
  return (
    <div className="flex h-screen flex-col overflow-hidden bg-white font-['Inter',sans-serif]">
      <TopBar />
      <div className="flex min-h-0 flex-1">
        <VehiclePanel />
        <main className="grid min-w-0 flex-1 grid-rows-[minmax(0,248fr)_minmax(0,260fr)]">
          <MapPanel />
          <div className="flex min-h-0 flex-col">
            <Tabs />
            <EventsTable />
          </div>
        </main>
      </div>
    </div>
  );
}
